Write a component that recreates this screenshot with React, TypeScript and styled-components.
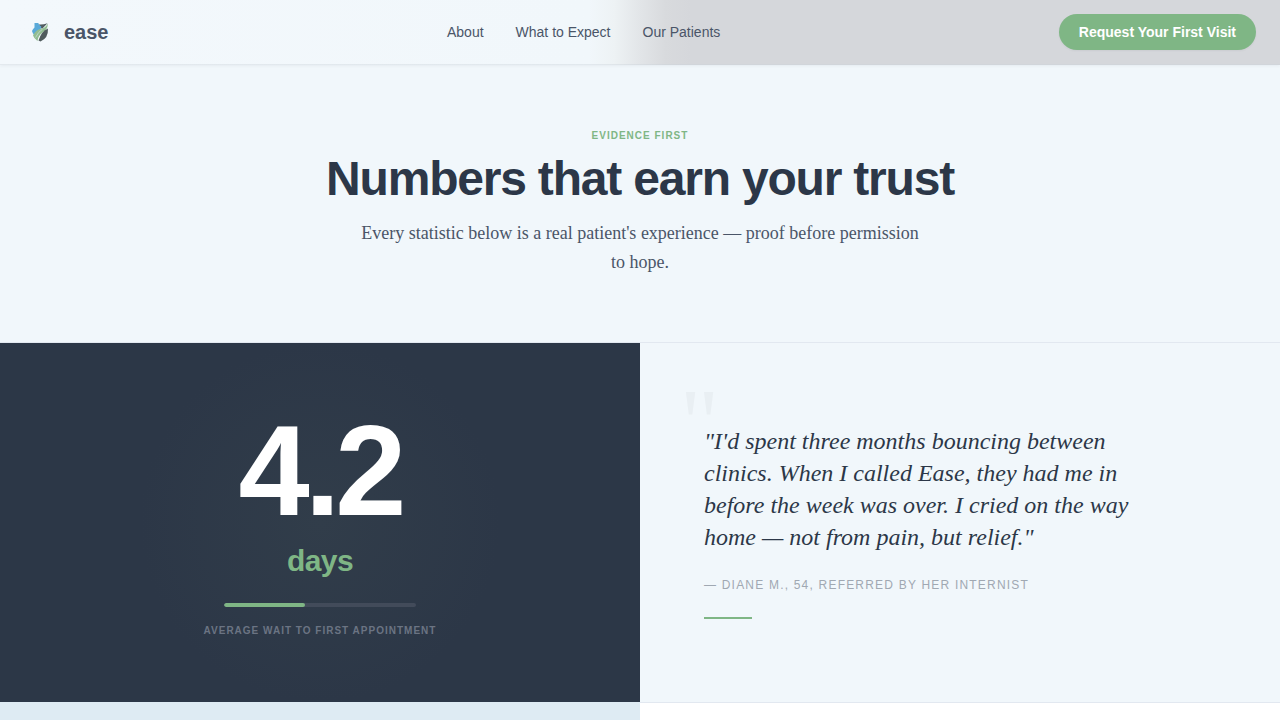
import React from "react";
import styled, { createGlobalStyle } from "styled-components";

const sans = '"Liberation Sans", Arial, sans-serif';
const serif = '"Liberation Serif", "Times New Roman", serif';

const GlobalStyle = createGlobalStyle`
  *, *::before, *::after { box-sizing: border-box; }
  body { margin: 0; background: #f1f7fb; color: #2c3748; font-family: ${sans}; }
  h1, p, blockquote, figure { margin: 0; }
`;

const Page = styled.div`
  min-height: 100vh;
  display: flex;
  flex-direction: column;
`;

const Header = styled.header`
  display: flex;
  justify-content: space-between;
  align-items: center;
  padding: 14px 24px;
  border-bottom: 1px solid rgba(203, 210, 218, 0.4);
  background: linear-gradient(90deg, #f3f8fc 0%, #f1f7fb 46%, #edf2f4 48%, #e2e5e8 50%, #d8dadd 52%, #d5d7db 54%);
  box-shadow: 0 1px 3px rgba(45, 55, 72, 0.06);
`;

const Brand = styled.a`
  display: flex;
  align-items: center;
  gap: 8px;
  color: #4a5568;
  font-size: 20px;
  line-height: 24px;
  font-weight: 700;
  text-decoration: none;
`;

const BrandIcon = styled.span`
  display: flex;
  padding: 4px;
`;

const Nav = styled.nav`
  display: flex;
  gap: 32px;
`;

const NavLink = styled.a`
  color: #4a5568;
  font-size: 14px;
  line-height: 20px;
  text-decoration: none;
`;

const VisitButton = styled.button`
  height: 36px;
  padding: 0 20px;
  border: 0;
  border-radius: 18px;
  background: #7fb685;
  color: #fff;
  font: 700 14px/20px ${sans};
  box-shadow: 0 1px 2px rgba(45, 55, 72, 0.06);
  cursor: pointer;
`;

const Intro = styled.section`
  display: flex;
  flex-direction: column;
  align-items: center;
  padding: 63px 24px 65px;
  border-bottom: 1px solid #e2e8f0;
  text-align: center;
`;

const Label = styled.p<{ $color: string }>`
  color: ${(p) => p.$color};
  font-size: 10px;
  line-height: 15px;
  font-weight: 700;
  letter-spacing: 1px;
  text-transform: uppercase;
`;

const Title = styled.h1`
  margin-top: 8px;
  font-size: 48px;
  line-height: 56px;
  font-weight: 700;
  letter-spacing: -0.025em;
`;

const Lead = styled.p`
  max-width: 576px;
  margin-top: 12px;
  color: #4a5568;
  font-family: ${serif};
  font-size: 18px;
  line-height: 29px;
`;

const Split = styled.section`
  display: grid;
  grid-template-columns: 1fr 1fr;
`;

const StatPanel = styled.div`
  display: flex;
  flex-direction: column;
  align-items: center;
  justify-content: center;
  padding: 64px;
  background: radial-gradient(circle at center, #313d4a 0%, #2c3747 180px);
`;

const StatNumber = styled.p`
  color: #fff;
  font-size: 128px;
  line-height: 128px;
  font-weight: 700;
  letter-spacing: -5px;
`;

const StatUnit = styled.p`
  margin-top: 8px;
  color: #7fb685;
  font-size: 30px;
  line-height: 36px;
  font-weight: 700;
  letter-spacing: -0.02em;
`;

const Meter = styled.div`
  width: 192px;
  height: 4px;
  margin: 24px 0 16px;
  border-radius: 2px;
  background: #424b5a;
  overflow: hidden;
`;

const MeterFill = styled.div`
  height: 100%;
  border-radius: 2px;
  background: #7fb685;
`;

const QuotePanel = styled.figure`
  position: relative;
  display: flex;
  flex-direction: column;
  justify-content: center;
  padding: 64px 64px 66px;
`;

const QuoteMark = styled.span`
  position: absolute;
  top: 56px;
  left: 40px;
  color: #e9eff3;
  font-family: ${serif};
  font-size: 96px;
  line-height: 48px;
`;

const Quote = styled.blockquote`
  position: relative;
  max-width: 448px;
  font-family: ${serif};
  font-size: 24px;
  line-height: 32px;
  font-style: italic;
`;

const Source = styled.figcaption`
  margin-top: 24px;
  color: #a0a8b2;
  font-size: 12px;
  line-height: 16px;
  letter-spacing: 0.1em;
  text-transform: uppercase;
`;

const Rule = styled.div`
  width: 48px;
  height: 2px;
  margin-top: 24px;
  background: #7fb685;
`;

const NextRow = styled(Split)`
  flex: 1;
`;

const NextPanel = styled.div<{ $color: string; $line?: boolean }>`
  min-height: 16px;
  background: ${(p) => p.$color};
  border-top: ${(p) => (p.$line ? "1px solid #e2e8f0" : "0")};
`;

function Logo() {
  return (
    <svg width="24" height="24" viewBox="0 0 24 24" aria-hidden="true">
      <path d="M10.6 4.500Q15 5 19.500 3.200L14 9z" fill="#505c60" />
      <path d="M6.500 3h3.800q.2 2 3 3.500L12.500 10 6 15Q4.500 13 4 11q1-2.500 2.500-3.500z" fill="#59a9d8" />
      <path d="M5 15.500Q8 9.500 13 8.700q4-.5 7-5.200Q19.500 10 14.500 12.500 10 15.500 9.500 21 6 18.500 5 15.500z" fill="#92bd91" />
      <path d="M7.500 17.500q3-6 7-8.300" fill="none" stroke="#b9d5c8" />
      <path d="M20 8.500Q13.500 11 10.500 20.500l2 1Q20.500 18 20 8.500z" fill="#505b5d" />
    </svg>
  );
}

const links = ["About", "What to Expect", "Our Patients"];

export default function App() {
  const progress = 42;
  return (
    <Page>
      <GlobalStyle />
      <Header>
        <Brand href="#">
          <BrandIcon>
            <Logo />
          </BrandIcon>
          ease
        </Brand>
        <Nav>
          {links.map((text) => (
            <NavLink href="#" key={text}>
              {text}
            </NavLink>
          ))}
        </Nav>
        <VisitButton type="button">Request Your First Visit</VisitButton>
      </Header>
      <main>
        <Intro>
          <Label $color="#7fb685">Evidence first</Label>
          <Title>Numbers that earn your trust</Title>
          <Lead>
            Every statistic below is a real patient's experience — proof before permission to hope.
          </Lead>
        </Intro>
        <Split>
          <StatPanel>
            <StatNumber>4.2</StatNumber>
            <StatUnit>days</StatUnit>
            <Meter>
              <MeterFill style={{ width: `${progress}%` }} />
            </Meter>
            <Label $color="#6b7483">Average wait to first appointment</Label>
          </StatPanel>
          <QuotePanel>
            <QuoteMark aria-hidden="true">"</QuoteMark>
            <Quote>
              "I'd spent three months bouncing between clinics. When I called Ease, they had me in
              before the week was over. I cried on the way home — not from pain, but relief."
            </Quote>
            <Source>— Diane M., 54, referred by her internist</Source>
            <Rule />
          </QuotePanel>
        </Split>
      </main>
      <NextRow>
        <NextPanel $color="#deebf3" />
        <NextPanel $color="#ffffff" $line />
      </NextRow>
    </Page>
  );
}
